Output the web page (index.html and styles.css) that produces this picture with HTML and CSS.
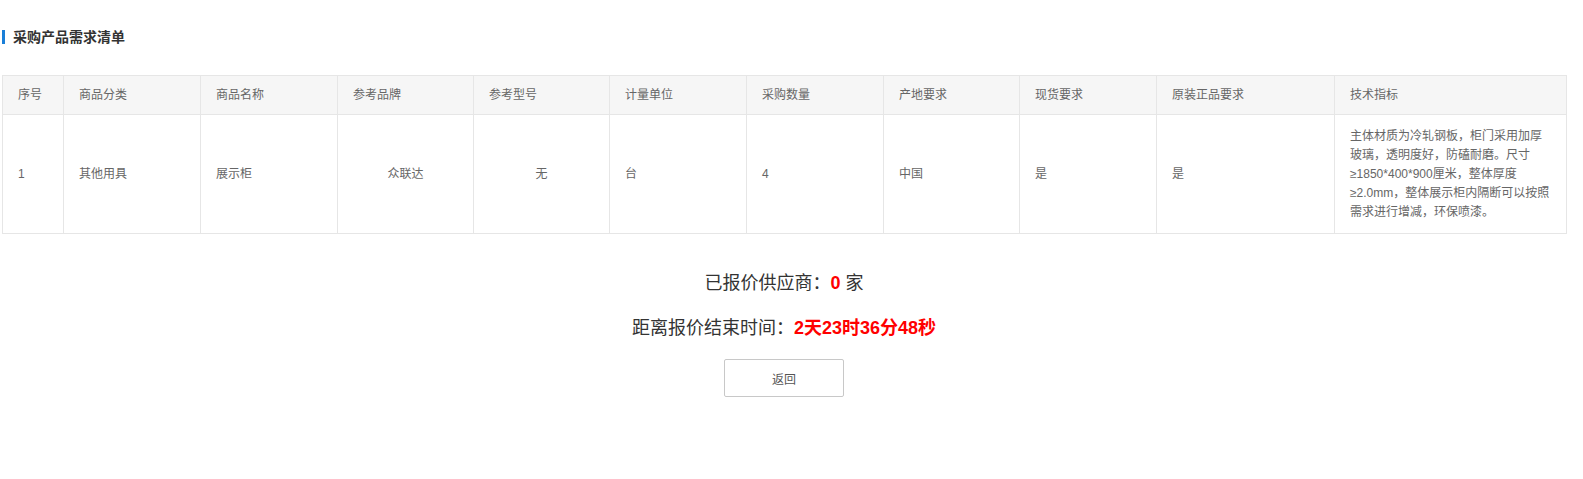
FILE: index.html
```html
<!DOCTYPE html>
<html lang="zh-CN">
<head>
<meta charset="utf-8">
<title>采购产品需求清单</title>
<link rel="stylesheet" href="styles.css">
</head>
<body>
<div class="page">
  <h2 class="section-title">采购产品需求清单</h2>
  <table class="req-table">
    <colgroup>
      <col class="c-no"><col class="c-std"><col class="c-std"><col class="c-brand"><col class="c-brand">
      <col class="c-std"><col class="c-std"><col class="c-brand"><col class="c-std"><col class="c-orig"><col class="c-tech">
    </colgroup>
    <thead>
      <tr>
        <th>序号</th><th>商品分类</th><th>商品名称</th><th>参考品牌</th><th>参考型号</th><th>计量单位</th><th>采购数量</th><th>产地要求</th><th>现货要求</th><th>原装正品要求</th><th>技术指标</th>
      </tr>
    </thead>
    <tbody>
      <tr>
        <td>1</td>
        <td>其他用具</td>
        <td>展示柜</td>
        <td class="center">众联达</td>
        <td class="center">无</td>
        <td>台</td>
        <td>4</td>
        <td>中国</td>
        <td>是</td>
        <td>是</td>
        <td class="tech">主体材质为冷轧钢板，柜门采用加厚玻璃，透明度好，防磕耐磨。尺寸≥1850*400*900厘米，整体厚度≥2.0mm，整体展示柜内隔断可以按照需求进行增减，环保喷漆。</td>
      </tr>
    </tbody>
  </table>
  <div class="summary">
    <p class="summary-line">已报价供应商：<span class="hl">0</span> 家</p>
    <p class="summary-line second">距离报价结束时间：<span class="hl">2天23时36分48秒</span></p>
    <button class="back-btn" type="button">返回</button>
  </div>
</div>
</body>
</html>
```

FILE: styles.css
```css
html, body {
  margin: 0;
  padding: 0;
  background: #fff;
}
body {
  font-family: "Liberation Sans", "Noto Sans CJK SC", sans-serif;
  color: #666;
  font-size: 12px;
}
.page {
  padding: 0 17px 0 2px;
}
.section-title {
  margin: 30px 0 31px;
  padding-left: 8px;
  border-left: 3px solid #1a7fd8;
  font-size: 14px;
  line-height: 15px;
  height: 14px;
  font-weight: bold;
  color: #333;
}
.req-table {
  width: 1564px;
  table-layout: fixed;
  border-collapse: collapse;
}
.c-no { width: 61px; }
.c-std { width: 137px; }
.c-brand { width: 136px; }
.c-orig { width: 178px; }
.c-tech { width: 232px; }
.req-table th,
.req-table td {
  border: 1px solid #e6e6e6;
  padding: 0 13px 0 15px;
  text-align: left;
  font-weight: normal;
  color: #666;
  font-size: 12px;
  vertical-align: middle;
}
.req-table th {
  background: #f6f6f6;
  height: 38px;
  line-height: 18px;
}
.req-table td {
  height: 118px;
  line-height: 19px;
}
.req-table td.center {
  text-align: center;
  padding: 0 14px;
}
.summary {
  display: flex;
  flex-direction: column;
  align-items: center;
  padding-top: 37px;
}
.summary-line {
  margin: 0;
  font-size: 18px;
  line-height: 24px;
  color: #333;
}
.summary-line.second {
  margin-top: 21px;
}
.hl {
  color: #ff0000;
  font-weight: bold;
}
.back-btn {
  margin-top: 19px;
  width: 120px;
  height: 38px;
  background: #fff;
  border: 1px solid #c8c8c8;
  border-radius: 2px;
  font-family: "Liberation Sans", "Noto Sans CJK SC", sans-serif;
  font-size: 12px;
  color: #555;
  padding: 0;
}
```
